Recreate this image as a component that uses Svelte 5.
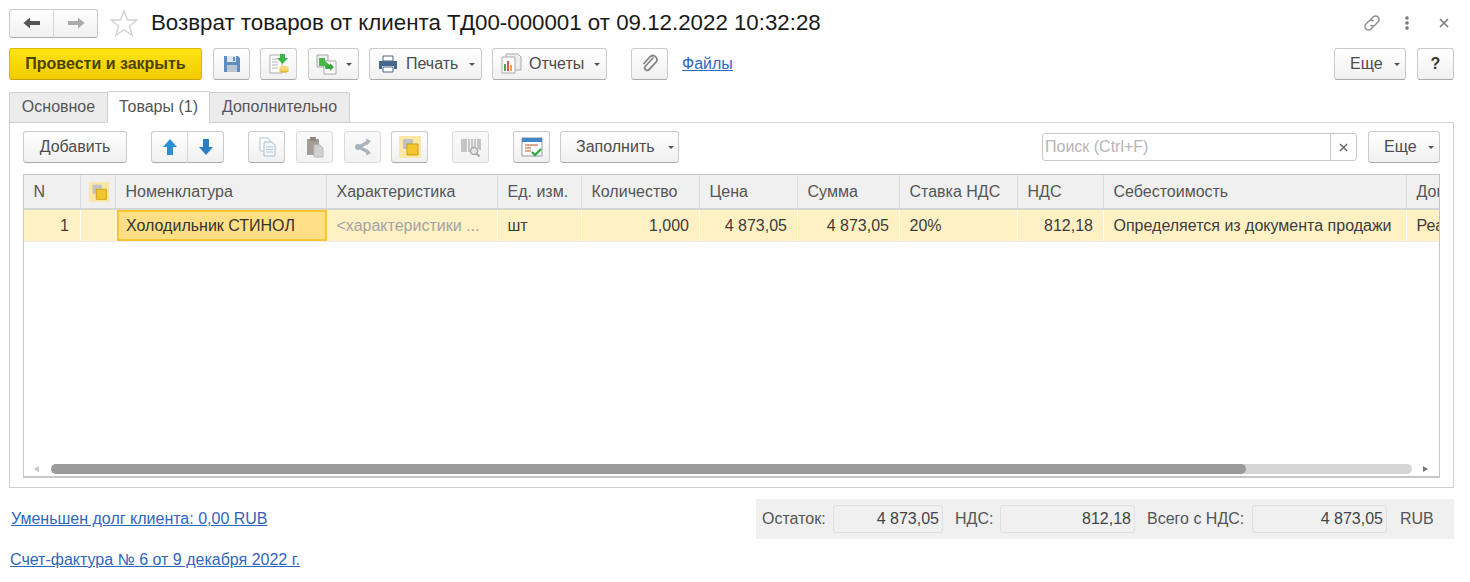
<script>
  const columns = [
    { title: "N" },
    { title: "", icon: true },
    { title: "Номенклатура" },
    { title: "Характеристика" },
    { title: "Ед. изм." },
    { title: "Количество" },
    { title: "Цена" },
    { title: "Сумма" },
    { title: "Ставка НДС" },
    { title: "НДС" },
    { title: "Себестоимость" },
    { title: "Дог" }
  ]

  const cells = [
    { text: "1", right: true },
    { text: "" },
    { text: "Холодильник СТИНОЛ", current: true },
    { text: "<характеристики ...", muted: true },
    { text: "шт" },
    { text: "1,000", right: true },
    { text: "4 873,05", right: true },
    { text: "4 873,05", right: true },
    { text: "20%" },
    { text: "812,18", right: true },
    { text: "Определяется из документа продажи" },
    { text: "Реализация" }
  ]
</script>

<div class="form">
  <header class="titlebar">
    <div class="navgroup">
      <button class="btn nav">
        <svg width="18" height="12" viewBox="0 0 18 12"><path d="M0.500 6L7 0.500v3.500h10v4H7v3.500z" fill="#555"/></svg>
      </button>
      <button class="btn nav">
        <svg width="18" height="12" viewBox="0 0 18 12"><path d="M17.500 6L11 0.500v3.500H1v4h10v3.500z" fill="#aaa"/></svg>
      </button>
    </div>
    <svg class="star" width="30" height="28" viewBox="0 0 30 28"><path d="M15 2l3.600 9h9.400l-7.600 6 2.800 9.400L15 20.800 6.800 26.400l2.800-9.400L2 11h9.400z" fill="#fff" stroke="#d0d0d0" stroke-width="1.300"/></svg>
    <h1>Возврат товаров от клиента ТД00-000001 от 09.12.2022 10:32:28</h1>
    <div class="winicons">
      <svg width="20" height="20" viewBox="0 0 20 20" fill="none" stroke="#8a8a8a" stroke-width="1.400"><path d="M8.500 6.500l2.500-2.500a3.300 3.300 0 0 1 5 5l-3 3a3.300 3.300 0 0 1-4.500 0"/><path d="M11.500 13.500l-2.500 2.500a3.300 3.300 0 0 1-5-5l3-3a3.300 3.300 0 0 1 4.500 0"/></svg>
      <svg class="dots" width="6" height="16" viewBox="0 0 6 16" fill="#777"><circle cx="3" cy="3" r="1.800"/><circle cx="3" cy="8" r="1.800"/><circle cx="3" cy="13" r="1.800"/></svg>
      <svg class="close" width="10" height="10" viewBox="0 0 10 10" stroke="#777" stroke-width="1.500"><path d="M1 1l8 8M9 1l-8 8"/></svg>
    </div>
  </header>

  <div class="toolbar">
    <button class="btn primary">Провести и закрыть</button>
    <button class="btn icon g11">
      <svg width="20" height="20" viewBox="0 0 20 20"><path d="M2 2h14l2 2v14H2z" fill="#5f8dbf"/><path d="M5 2h9v6H5z" fill="#dce6f0"/><path d="M5 11h10v7H5z" fill="#b9c6d4"/><path d="M11 3h2v4h-2z" fill="#5f8dbf"/></svg>
    </button>
    <button class="btn icon g10">
      <svg width="24" height="24" viewBox="0 0 24 24"><path d="M3 3h12v18H3z" fill="#fff" stroke="#a9a9a9"/><path d="M5 7h8M5 10h6M5 13h6M5 16h6" stroke="#b5b5b5"/><ellipse cx="17" cy="19" rx="4.500" ry="1.800" fill="#e3b93a"/><path d="M12.500 15.500v3.500h9v-3.500z" fill="#efcf5c"/><ellipse cx="17" cy="15.500" rx="4.500" ry="1.800" fill="#f5dc7a"/><path d="M13 2h5v4h3l-5.500 6L10 6h3z" fill="#3fb54a"/></svg>
    </button>
    <button class="btn icon wide g11">
      <svg width="24" height="22" viewBox="0 0 24 22"><path d="M2 2h11v12H2z" fill="#eee" stroke="#a9a9a9"/><path d="M9 8h12v13H9z" fill="#fff" stroke="#a9a9a9"/><path d="M4 5h6v3l5 4-5 4v-3H4z" fill="#4cb648"/><path d="M11 12h4v-2l4 4-4 4v-2h-4z" fill="#3aa53b"/></svg>
      <i class="caret"></i>
    </button>
    <button class="btn withicon print g10">
      <svg width="20" height="18" viewBox="0 0 20 18"><path d="M5 1h10v5H5z" fill="#fff" stroke="#45678c"/><path d="M1 6h18v8h-3v-3H4v3H1z" fill="#45678c"/><path d="M5 12h10v5H5z" fill="#fff" stroke="#45678c"/></svg>
      <span>Печать</span><i class="caret"></i>
    </button>
    <button class="btn withicon reports g10">
      <svg width="22" height="22" viewBox="0 0 22 22"><path d="M6 1h12l3 3v13H6z" fill="#eee" stroke="#aaa"/><path d="M2 4h13v16H2z" fill="#fff" stroke="#aaa"/><path d="M4 11h2v7H4z" fill="#4aa84a"/><path d="M7 8h2v10H7z" fill="#d9534f"/><path d="M10 12h2v6h-2z" fill="#e8a33c"/></svg>
      <span>Отчеты</span><i class="caret"></i>
    </button>
    <button class="btn icon g24">
      <svg width="18" height="20" viewBox="0 0 18 20" fill="none" stroke="#858585" stroke-width="1.800"><path d="M12.500 3.500l-8 8.500a2.500 2.500 0 0 0 3.600 3.500l7-7.500a4 4 0 0 0-5.700-5.500l-7 7.500"/></svg>
    </button>
    <a class="link files" href="#files">Файлы</a>
    <button class="btn more top-more">Еще<i class="caret"></i></button>
    <button class="btn icon help g11">?</button>
  </div>

  <nav class="tabs">
    <div class="tab first">Основное</div>
    <div class="tab active">Товары (1)</div>
    <div class="tab last">Дополнительно</div>
  </nav>

  <section class="panel">
    <div class="panelbar">
      <button class="btn add">Добавить</button>
      <div class="navgroup updown">
        <button class="btn arrow">
          <svg width="16" height="18" viewBox="0 0 16 18"><path d="M8 1l7 8h-4v8H5V9H1z" fill="#2b8fd6"/></svg>
        </button>
        <button class="btn arrow">
          <svg width="16" height="18" viewBox="0 0 16 18"><path d="M8 17L1 9h4V1h6v8h4z" fill="#2b7fc4"/></svg>
        </button>
      </div>
      <button class="btn icon g24 soft">
        <svg width="20" height="20" viewBox="0 0 20 20"><path d="M3 1h8l2 2v11H3z" fill="#fff" stroke="#b3c4d4"/><path d="M7 5h8l3 3v11H7z" fill="#f4f8fb" stroke="#a9bccd"/><path d="M9 10h7M9 12.500h7M9 15h7" stroke="#b3c4d4"/></svg>
      </button>
      <button class="btn icon g11 soft off">
        <svg width="20" height="22" viewBox="0 0 20 22"><path d="M2 3h12v16H2z" fill="#a39d97"/><path d="M5 1h6v4H5z" fill="#8d8780"/><path d="M9 9h6l3 3v9H9z" fill="#d0d0d0" stroke="#bbb"/></svg>
      </button>
      <button class="btn icon g11 soft off">
        <svg width="20" height="18" viewBox="0 0 20 18"><path d="M15 4L6 9l9 5" fill="none" stroke="#a9b3bd" stroke-width="3.200"/><path d="M13 0.500l5 2.500-4 4zM13 17.500l5-2.500-4-4z" fill="#a9b3bd"/><circle cx="5" cy="9" r="3" fill="#a9b3bd"/></svg>
      </button>
      <button class="btn icon g10 soft">
        <svg width="24" height="24" viewBox="0 0 24 24"><use href="#squares"/></svg>
      </button>
      <button class="btn icon g24 soft off">
        <svg width="24" height="24" viewBox="0 0 24 24"><path d="M3 4v13M5 4v13M7 4v13M10 4v13M13 4v10M16 4v8M19 4v10M21 4v11" stroke="#b4b4b4" stroke-width="1.500"/><circle cx="15" cy="16" r="3.500" fill="#e8e8e8" stroke="#a8a8a8" stroke-width="1.500"/><path d="M17.500 18.500l3 3" stroke="#a8a8a8" stroke-width="2"/></svg>
      </button>
      <button class="btn icon g24 soft">
        <svg width="24" height="24" viewBox="0 0 24 24"><path d="M2 3h20v18H2z" fill="#fff" stroke="#8e9ba8"/><path d="M2 3h20v4H2z" fill="#3f87c6"/><path d="M5 10h13M5 13h6M5 16h6" stroke="#d98a6a" stroke-width="1.400"/><path d="M12 17l3 3 6-6" fill="none" stroke="#35a83d" stroke-width="2.400"/></svg>
      </button>
      <button class="btn fill g10">Заполнить<i class="caret"></i></button>
      <div class="search">
        <input placeholder="Поиск (Ctrl+F)" />
        <span class="clear">
          <svg width="9" height="9" viewBox="0 0 10 10" stroke="#666" stroke-width="1.500"><path d="M1 1l8 8M9 1l-8 8"/></svg>
        </span>
      </div>
      <button class="btn more inner-more">Еще<i class="caret"></i></button>
    </div>

    <div class="table">
      <div class="row head">
        {#each columns as col}
          <div class="cell">
            {#if col.icon}
              <svg width="22" height="22" viewBox="0 0 24 24"><use href="#squares"/></svg>
            {:else}
              {col.title}
            {/if}
          </div>
        {/each}
      </div>
      <div class="row data">
        {#each cells as cell}
          <div class="cell" class:right={cell.right} class:muted={cell.muted} class:current={cell.current}>{cell.text}</div>
        {/each}
      </div>
      <div class="spacer"></div>
      <div class="scroll">
        <svg class="tri" width="6" height="6" viewBox="0 0 6 6"><path d="M5 0v6L0 3z" fill="#c4c4c4"/></svg>
        <div class="track"><div class="thumb"></div></div>
        <svg class="tri" width="6" height="6" viewBox="0 0 6 6"><path d="M1 0v6l5-3z" fill="#777"/></svg>
      </div>
    </div>
  </section>

  <footer class="bottom">
    <div class="links">
      <a class="link debt" href="#debt">Уменьшен долг клиента: 0,00 RUB</a>
      <a class="link invoice" href="#invoice">Счет-фактура № 6 от 9 декабря 2022 г.</a>
    </div>
    <div class="totals">
      <span class="lbl l1">Остаток:</span>
      <span class="val v1">4 873,05</span>
      <span class="lbl l2">НДС:</span>
      <span class="val v2">812,18</span>
      <span class="lbl l3">Всего с НДС:</span>
      <span class="val v3">4 873,05</span>
      <span class="lbl cur">RUB</span>
    </div>
  </footer>

  <svg class="defs" width="0" height="0">
    <defs>
      <g id="squares">
        <path d="M1 1h22v22H1z" fill="#fbe8a6"/>
        <path d="M5 4h10v10H5z" fill="#c2c2c2"/>
        <path d="M9 9h11v11H9z" fill="#f5c62c" stroke="#c99f1a"/>
      </g>
    </defs>
  </svg>
</div>

<style>
  :global(body) {
    background: #fff;
    overflow: hidden;
  }
  .form {
    width: 1470px;
    height: 582px;
    box-sizing: border-box;
    padding: 8px 16px 0 9px;
    font-family: "Liberation Sans", Arial, sans-serif;
    font-size: 16px;
    color: #444;
    overflow: hidden;
  }
  .titlebar {
    display: flex;
    align-items: center;
    height: 30px;
  }
  h1 {
    margin: 0 0 0 12px;
    font-size: 22.3px;
    font-weight: 400;
    color: #1a1a1a;
    white-space: nowrap;
  }
  .star {
    margin-left: 11px;
  }
  .winicons {
    margin-left: auto;
    display: flex;
    align-items: center;
    padding-right: 5px;
  }
  .dots {
    margin-left: 22px;
  }
  .close {
    margin-left: 29px;
  }

  .btn {
    display: inline-flex;
    align-items: center;
    justify-content: center;
    box-sizing: border-box;
    height: 32px;
    padding: 0;
    border: 1px solid #cbcbcb;
    border-bottom-color: #aaa;
    border-radius: 3px;
    background: linear-gradient(#fff, #f0f0f0);
    font: inherit;
    color: #4c4c4c;
    flex: none;
  }
  .soft svg {
    display: block;
  }
  .off {
    background: linear-gradient(#fafafa, #f2f2f2);
    border-color: #dadada;
  }
  .caret {
    width: 0;
    height: 0;
    margin-left: 11px;
    border: 3px solid transparent;
    border-top: 3px solid #555;
    border-bottom: 0;
  }

  .navgroup {
    display: flex;
  }
  .nav {
    width: 45px;
    height: 29px;
  }
  .nav:first-child,
  .arrow:first-child {
    border-radius: 3px 0 0 3px;
    border-right: 1px solid #d5d5d5;
  }
  .nav:last-child,
  .arrow:last-child {
    border-radius: 0 3px 3px 0;
    border-left: 0;
  }
  .nav:last-child {
    width: 44px;
  }

  .toolbar {
    display: flex;
    align-items: center;
    margin-top: 10px;
  }
  .primary {
    width: 193px;
    background: linear-gradient(#ffe411, #f2cb00);
    border-color: #dcb70a;
    border-bottom-color: #c7a400;
    font-weight: 700;
    color: #4d4300;
  }
  .icon {
    width: 37px;
  }
  .wide {
    width: 51px;
    gap: 0;
  }
  .wide .caret {
    margin-left: 7px;
  }
  .g10 {
    margin-left: 10px;
  }
  .g11 {
    margin-left: 11px;
  }
  .g24 {
    margin-left: 24px;
  }
  .withicon {
    justify-content: flex-start;
  }
  .print {
    width: 113px;
    padding-left: 8px;
  }
  .print span {
    margin-left: 8px;
  }
  .reports {
    width: 115px;
    padding-left: 7px;
  }
  .reports span {
    margin-left: 7px;
  }
  .reports .caret {
    margin-left: 10px;
  }
  .link {
    color: #2f66c0;
    text-decoration: underline;
    white-space: nowrap;
  }
  .files {
    margin-left: 14px;
  }
  .more {
    width: 72px;
    justify-content: flex-start;
    padding-left: 15px;
  }
  .top-more {
    margin-left: auto;
  }
  .help {
    font-weight: 700;
    font-size: 16px;
    color: #333;
  }

  .tabs {
    display: flex;
    align-items: flex-end;
    height: 32px;
    margin-top: 11px;
    position: relative;
    z-index: 1;
    margin-bottom: -1px;
  }
  .tab {
    box-sizing: border-box;
    height: 31px;
    line-height: 27px;
    text-align: center;
    background: #ececec;
    border: 1px solid #cfcfcf;
    border-bottom: 1px solid #cfcfcf;
    color: #555;
  }
  .first {
    width: 98px;
    border-right: 0;
    border-radius: 2px 0 0 0;
  }
  .active {
    width: 103px;
    height: 32px;
    line-height: 29px;
    background: #fff;
    border-bottom-color: #fff;
    border-radius: 2px 2px 0 0;
  }
  .last {
    width: 140px;
    border-left: 0;
    border-radius: 0 2px 0 0;
  }

  .panel {
    box-sizing: border-box;
    height: 366px;
    border: 1px solid #cfcfcf;
    padding: 8px 13px 9px;
    display: flex;
    flex-direction: column;
  }
  .panelbar {
    display: flex;
    align-items: center;
    height: 32px;
  }
  .add {
    width: 104px;
  }
  .updown {
    margin-left: 24px;
  }
  .arrow {
    width: 37px;
  }
  .arrow:last-child {
    width: 36px;
  }
  .fill {
    width: 119px;
    justify-content: flex-start;
    padding-left: 15px;
  }
  .fill .caret {
    margin-left: 13px;
  }
  .search {
    display: flex;
    box-sizing: border-box;
    width: 315px;
    height: 28px;
    margin-left: auto;
    border: 1px solid #c8c8c8;
    border-radius: 3px;
    background: #fff;
  }
  .search input {
    flex: 1;
    min-width: 0;
    border: 0;
    outline: 0;
    padding: 0 0 0 2px;
    background: transparent;
    font: inherit;
  }
  .search input::placeholder {
    color: #b5b5b5;
    opacity: 1;
  }
  .clear {
    display: flex;
    align-items: center;
    justify-content: center;
    width: 25px;
    border-left: 1px solid #c8c8c8;
  }
  .inner-more {
    margin-left: 11px;
  }

  .table {
    flex: 1;
    margin-top: 11px;
    display: flex;
    flex-direction: column;
    min-height: 0;
    border: 1px solid #c6c6c6;
    border-width: 1px 1px 2px;
    overflow: hidden;
  }
  .row {
    display: grid;
    grid-template-columns: 57px 35px 211px 171px 84px 118px 98px 102px 118px 86px 303px 33px;
  }
  .head {
    height: 35px;
    background: #f0f0f0;
    border-bottom: 2px solid #d5d5d5;
    box-sizing: border-box;
  }
  .head .cell {
    display: flex;
    align-items: center;
    padding: 0 0 0 9.500px;
    border-right: 1px solid #dcdcdc;
    color: #555;
    overflow: hidden;
    white-space: nowrap;
  }
  .head .cell:nth-child(2) {
    padding-left: 7px;
  }
  .head .cell:last-child {
    border-right: 0;
  }
  .data {
    height: 32px;
    box-sizing: border-box;
    background: #fff1c4;
    border-bottom: 1px solid #ececec;
  }
  .data .cell {
    box-sizing: border-box;
    padding: 0 10px 0 9.500px;
    line-height: 31px;
    border-right: 1px solid #fff;
    color: #3c3c3c;
    white-space: nowrap;
    overflow: hidden;
  }
  .data .cell:first-child {
    padding-right: 11px;
  }
  .data .cell:last-child {
    border-right: 0;
    padding-right: 0;
  }
  .right {
    text-align: right;
  }
  .data .muted {
    color: #a3a3a3;
  }
  .data .current {
    background: #fedf85;
    border: 2px solid #f7c531;
    line-height: 27px;
    padding-left: 7px;
    margin-left: 1px;
    color: #333;
  }
  .spacer {
    flex: 1;
  }
  .scroll {
    display: flex;
    align-items: center;
    padding: 0 11px 2px 10px;
  }
  .track {
    flex: 1;
    height: 10px;
    margin: 0 10px 0 11px;
    background: #d5d5d5;
    border-radius: 5px;
  }
  .thumb {
    width: 1195px;
    height: 10px;
    background: #9b9b9b;
    border-radius: 5px;
  }

  .bottom {
    display: flex;
    justify-content: space-between;
    margin-top: 11px;
  }
  .links {
    display: flex;
    flex-direction: column;
    align-items: flex-start;
    padding-top: 11px;
    gap: 23px;
  }
  .debt {
    margin-left: 2px;
  }
  .invoice {
    margin-left: 1px;
  }
  .totals {
    display: flex;
    align-items: center;
    box-sizing: border-box;
    width: 698px;
    height: 40px;
    padding-left: 6px;
    background: #f0f0f0;
  }
  .lbl {
    color: #555;
    white-space: nowrap;
  }
  .val {
    box-sizing: border-box;
    height: 28px;
    line-height: 26px;
    padding-right: 3px;
    text-align: right;
    border: 1px solid #e0e0e0;
    border-radius: 3px;
    color: #444;
  }
  .l1 {
    width: 71px;
  }
  .v1 {
    width: 110px;
  }
  .l2 {
    width: 57px;
    padding-left: 12px;
    box-sizing: border-box;
  }
  .v2 {
    width: 135px;
  }
  .l3 {
    width: 117px;
    padding-left: 12px;
    box-sizing: border-box;
  }
  .v3 {
    width: 135px;
  }
  .cur {
    margin-left: 13px;
  }
  .defs {
    position: absolute;
  }
</style>
